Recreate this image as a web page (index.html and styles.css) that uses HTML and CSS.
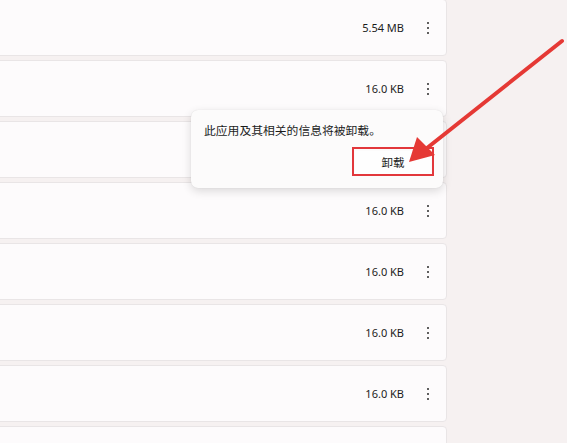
FILE: index.html
```html
<!DOCTYPE html>
<html lang="zh-CN">
<head>
    <meta charset="UTF-8">
    <meta name="viewport" content="width=device-width, initial-scale=1.0">
    <title>应用和功能</title>
    <link rel="stylesheet" href="styles.css">
</head>
<body>
    <div class="page">
        <div class="app-list">
            <div class="app-row"><span class="app-size">5.54 MB</span><button class="more-btn"><i></i><i></i><i></i></button></div>
            <div class="app-row"><span class="app-size">16.0 KB</span><button class="more-btn"><i></i><i></i><i></i></button></div>
            <!-- row under the flyout, its content is hidden -->
            <div class="app-row"></div>
            <div class="app-row"><span class="app-size">16.0 KB</span><button class="more-btn"><i></i><i></i><i></i></button></div>
            <div class="app-row"><span class="app-size">16.0 KB</span><button class="more-btn"><i></i><i></i><i></i></button></div>
            <div class="app-row"><span class="app-size">16.0 KB</span><button class="more-btn"><i></i><i></i><i></i></button></div>
            <div class="app-row"><span class="app-size">16.0 KB</span><button class="more-btn"><i></i><i></i><i></i></button></div>
            <div class="app-row"></div>
        </div>
    </div>

    <div class="flyout">
        <p>此应用及其相关的信息将被卸载。</p>
        <div class="flyout-actions">
            <div class="highlight">
                <button class="uninstall-btn">卸载</button>
            </div>
        </div>
    </div>

    <!-- annotation arrow -->
    <svg class="arrow" width="567" height="443" viewBox="0 0 567 443">
        <line x1="562" y1="41" x2="422" y2="152" stroke="#e53935" stroke-width="4" stroke-linecap="round"/>
        <polygon points="409,162 417,137 435,155" fill="#e53935"/>
    </svg>
</body>
</html>
```

FILE: styles.css
```css
body {
    margin: 0;
    padding: 0;
    font-family: "Noto Sans", "Noto Sans CJK SC", sans-serif;
    background-color: #f6f1f1;
    color: #1b1b1b;
    overflow: hidden;
}

.page {
    display: flex;
    align-items: flex-start;
    height: 443px;
    overflow: hidden;
}

.app-list {
    width: 457px;
    margin-left: -10px;
    margin-top: -1px;
    display: flex;
    flex-direction: column;
    gap: 4px;
}

.app-row {
    flex: 0 0 57px;
    box-sizing: border-box;
    display: flex;
    align-items: center;
    justify-content: flex-end;
    gap: 16px;
    padding-right: 10px;
    background-color: #fdfbfc;
    border: 1px solid #e9e5e6;
    border-radius: 4px;
}

.app-size {
    font-size: 11px;
    line-height: 14px;
}

.more-btn {
    width: 16px;
    height: 20px;
    padding: 0;
    border: none;
    background: none;
    display: flex;
    flex-direction: column;
    align-items: center;
    justify-content: center;
    gap: 3px;
}

.more-btn i {
    display: block;
    width: 2px;
    height: 2px;
    border-radius: 50%;
    background-color: #2b2b2b;
}

.flyout {
    position: absolute;
    left: 191px;
    top: 110px;
    width: 252px;
    height: 78px;
    box-sizing: border-box;
    padding: 12px 9px 0 13px;
    background-color: #fcfbfb;
    border-radius: 7px;
    box-shadow: 0 3px 10px rgba(0, 0, 0, 0.14), 0 0 1px rgba(0, 0, 0, 0.12);
}

.flyout p {
    margin: 0;
    font-size: 11.8px;
    line-height: 16px;
}

.flyout-actions {
    display: flex;
    justify-content: flex-end;
    margin-top: 9px;
}

.highlight {
    width: 82px;
    height: 29px;
    box-sizing: border-box;
    border: 2px solid #e2373b;
    padding: 1px;
}

.uninstall-btn {
    width: 100%;
    height: 100%;
    border: none;
    background-color: #fefefe;
    font-family: "Noto Sans CJK SC", sans-serif;
    font-size: 11.5px;
    color: #1b1b1b;
    padding: 0;
}

.arrow {
    position: absolute;
    left: 0;
    top: 0;
    pointer-events: none;
}
```
